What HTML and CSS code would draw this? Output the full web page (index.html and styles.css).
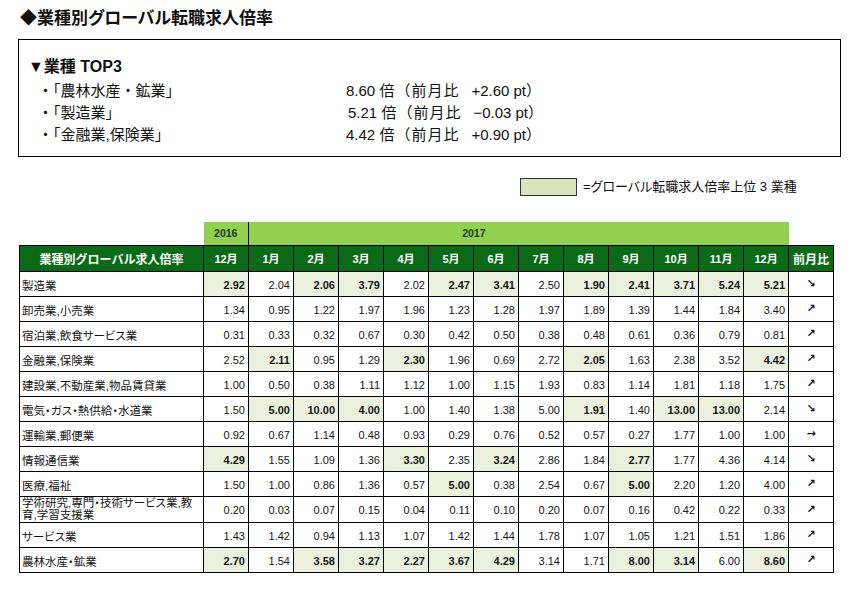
FILE: index.html
```html
<!DOCTYPE html>
<html lang="ja">
<head>
<meta charset="utf-8">
<title>業種別グローバル転職求人倍率</title>
<link rel="stylesheet" href="styles.css">
</head>
<body>
<h1 class="title">◆業種別グローバル転職求人倍率</h1>
<section class="top3">
  <div class="top3-head">▼業種 TOP3</div>
  <div class="top3-row"><span class="name">・「農林水産・鉱業」</span><span class="val">8.60 <span class="jp">倍（前月比</span><span class="pt">+2.60 pt</span>）</span></div>
  <div class="top3-row"><span class="name">・「製造業」</span><span class="val shift">5.21 <span class="jp">倍（前月比</span><span class="pt">−0.03 pt</span>）</span></div>
  <div class="top3-row"><span class="name">・「金融業,保険業」</span><span class="val">4.42 <span class="jp">倍（前月比</span><span class="pt">+0.90 pt</span>）</span></div>
</section>
<div class="legend"><span class="swatch"></span><span class="legend-text">=グローバル転職求人倍率上位 3 業種</span></div>
<table class="rates">
  <colgroup>
    <col class="c-label">
    <col class="c-m"><col class="c-m"><col class="c-m"><col class="c-m"><col class="c-m"><col class="c-m"><col class="c-m">
    <col class="c-m"><col class="c-m"><col class="c-m"><col class="c-m"><col class="c-m"><col class="c-m"><col class="c-m">
  </colgroup>
  <thead>
    <tr class="year"><td class="blank"></td><td class="y2016">2016</td><td colspan="10">2017</td><td colspan="2"></td><td class="blank"></td></tr>
    <tr class="head"><th class="hlabel">業種別グローバル求人倍率</th><th>12月</th><th>1月</th><th>2月</th><th>3月</th><th>4月</th><th>5月</th><th>6月</th><th>7月</th><th>8月</th><th>9月</th><th>10月</th><th>11月</th><th>12月</th><th class="hlabel">前月比</th></tr>
  </thead>
  <tbody>
    <tr><td class="lbl">製造業</td><td class="hl">2.92</td><td>2.04</td><td class="hl">2.06</td><td class="hl">3.79</td><td>2.02</td><td class="hl">2.47</td><td class="hl">3.41</td><td>2.50</td><td class="hl">1.90</td><td class="hl">2.41</td><td class="hl">3.71</td><td class="hl">5.24</td><td class="hl">5.21</td><td class="arr">↘</td></tr>
    <tr><td class="lbl">卸売業,小売業</td><td>1.34</td><td>0.95</td><td>1.22</td><td>1.97</td><td>1.96</td><td>1.23</td><td>1.28</td><td>1.97</td><td>1.89</td><td>1.39</td><td>1.44</td><td>1.84</td><td>3.40</td><td class="arr">↗</td></tr>
    <tr><td class="lbl">宿泊業,飲食サービス業</td><td>0.31</td><td>0.33</td><td>0.32</td><td>0.67</td><td>0.30</td><td>0.42</td><td>0.50</td><td>0.38</td><td>0.48</td><td>0.61</td><td>0.36</td><td>0.79</td><td>0.81</td><td class="arr">↗</td></tr>
    <tr><td class="lbl">金融業,保険業</td><td>2.52</td><td class="hl">2.11</td><td>0.95</td><td>1.29</td><td class="hl">2.30</td><td>1.96</td><td>0.69</td><td>2.72</td><td class="hl">2.05</td><td>1.63</td><td>2.38</td><td>3.52</td><td class="hl">4.42</td><td class="arr">↗</td></tr>
    <tr><td class="lbl">建設業,不動産業,物品賃貸業</td><td>1.00</td><td>0.50</td><td>0.38</td><td>1.11</td><td>1.12</td><td>1.00</td><td>1.15</td><td>1.93</td><td>0.83</td><td>1.14</td><td>1.81</td><td>1.18</td><td>1.75</td><td class="arr">↗</td></tr>
    <tr><td class="lbl">電気・ガス・熱供給・水道業</td><td>1.50</td><td class="hl">5.00</td><td class="hl">10.00</td><td class="hl">4.00</td><td>1.00</td><td>1.40</td><td>1.38</td><td>5.00</td><td class="hl">1.91</td><td>1.40</td><td class="hl">13.00</td><td class="hl">13.00</td><td>2.14</td><td class="arr">↘</td></tr>
    <tr><td class="lbl">運輸業,郵便業</td><td>0.92</td><td>0.67</td><td>1.14</td><td>0.48</td><td>0.93</td><td>0.29</td><td>0.76</td><td>0.52</td><td>0.57</td><td>0.27</td><td>1.77</td><td>1.00</td><td>1.00</td><td class="arr">→</td></tr>
    <tr><td class="lbl">情報通信業</td><td class="hl">4.29</td><td>1.55</td><td>1.09</td><td>1.36</td><td class="hl">3.30</td><td>2.35</td><td class="hl">3.24</td><td>2.86</td><td>1.84</td><td class="hl">2.77</td><td>1.77</td><td>4.36</td><td>4.14</td><td class="arr">↘</td></tr>
    <tr><td class="lbl">医療,福祉</td><td>1.50</td><td>1.00</td><td>0.86</td><td>1.36</td><td>0.57</td><td class="hl">5.00</td><td>0.38</td><td>2.54</td><td>0.67</td><td class="hl">5.00</td><td>2.20</td><td>1.20</td><td>4.00</td><td class="arr">↗</td></tr>
    <tr class="tall"><td class="lbl two">学術研究,専門・技術サービス業,教<br>育,学習支援業</td><td>0.20</td><td>0.03</td><td>0.07</td><td>0.15</td><td>0.04</td><td>0.11</td><td>0.10</td><td>0.20</td><td>0.07</td><td>0.16</td><td>0.42</td><td>0.22</td><td>0.33</td><td class="arr">↗</td></tr>
    <tr><td class="lbl">サービス業</td><td>1.43</td><td>1.42</td><td>0.94</td><td>1.13</td><td>1.07</td><td>1.42</td><td>1.44</td><td>1.78</td><td>1.07</td><td>1.05</td><td>1.21</td><td>1.51</td><td>1.86</td><td class="arr">↗</td></tr>
    <tr><td class="lbl">農林水産・鉱業</td><td class="hl">2.70</td><td>1.54</td><td class="hl">3.58</td><td class="hl">3.27</td><td class="hl">2.27</td><td class="hl">3.67</td><td class="hl">4.29</td><td>3.14</td><td>1.71</td><td class="hl">8.00</td><td class="hl">3.14</td><td>6.00</td><td class="hl">8.60</td><td class="arr">↗</td></tr>
  </tbody>
</table>
</body>
</html>
```
FILE: styles.css
```css
* { box-sizing: border-box; }

body {
  margin: 0;
  background: #fff;
  color: #111;
  font-family: "Liberation Sans", "Noto Sans CJK JP", sans-serif;
  font-feature-settings: "palt";
}

.title {
  margin: 9px 0 0 20px;
  font-size: 17px;
  line-height: 20px;
  font-weight: bold;
}

.top3 {
  margin: 10px 0 0 18px;
  width: 823px;
  height: 118px;
  border: 1px solid #000;
  padding: 15px 0 0 9px;
  font-feature-settings: normal;
}

.top3-head {
  font-size: 16px;
  font-weight: bold;
  line-height: 24px;
  margin-bottom: 1px;
}

.top3-row {
  display: grid;
  grid-template-columns: 308px auto;
  margin-left: 10px;
  font-size: 15px;
  line-height: 22px;
}

.top3-row .val { font-family: "Liberation Sans Narrow", "Liberation Sans", "Noto Sans CJK JP", sans-serif; }
.top3-row .val.shift { padding-left: 2px; }
.top3-row .jp { letter-spacing: 1px; }
.top3-row .pt { margin-left: 12px; }

.legend {
  display: flex;
  align-items: center;
  margin: 21px 0 0 520px;
}

.swatch {
  width: 57px;
  height: 18px;
  border: 1px solid #333;
  background: #d8e4bc;
}

.legend-text {
  margin-left: 6px;
  font-size: 13px;
  line-height: 18px;
}

.rates {
  margin: 26px 0 0 19px;
  border-collapse: collapse;
  table-layout: fixed;
  width: 814px;
}

.c-label { width: 184px; }
.c-m { width: 45px; }

.year td {
  height: 23px;
  padding: 0;
  background: #92d050;
  color: #1d3a12;
  font-size: 10.5px;
  font-weight: bold;
  text-align: center;
}

.year td.blank { background: transparent; }
.year td.y2016 { border-right: 1px solid #000; }

.head th {
  height: 26px;
  padding: 0;
  background: #0b6a17;
  color: #fff;
  border: 1px solid #000;
  font-size: 11px;
  font-weight: bold;
  text-align: center;
}

.head th.hlabel {
  font-size: 12px;
  font-feature-settings: normal;
}

tbody td {
  height: 25px;
  padding: 2px 3px 0 0;
  border: 1px solid #000;
  font-size: 11px;
  text-align: right;
  color: #151515;
  white-space: nowrap;
}

tbody td.lbl {
  text-align: left;
  padding-left: 2px;
  font-size: 11.5px;
}

tbody td.lbl.two {
  vertical-align: top;
  line-height: 12px;
  padding-top: 0;
}

tbody tr.tall td { height: 26px; }

tbody td.hl {
  background: #ebf1de;
  font-weight: bold;
}

tbody td.arr {
  text-align: center;
  padding: 0;
  font-family: "DejaVu Sans", sans-serif;
  font-size: 11px;
  font-weight: bold;
}
```
